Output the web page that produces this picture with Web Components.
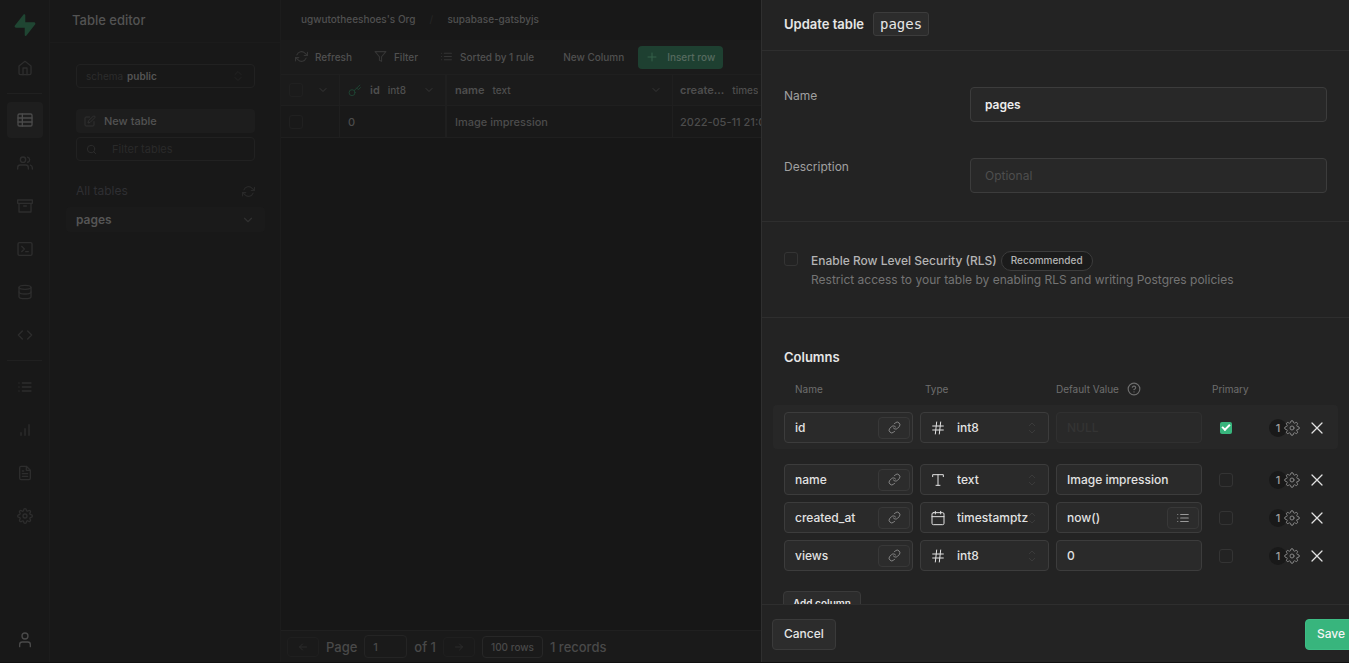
<!DOCTYPE html>
<html lang="en">
<head>
<meta charset="utf-8">
<meta name="viewport" content="width=device-width, initial-scale=1">
<title>Table editor</title>
<style>
  html, body { margin: 0; height: 100%; background: #181818; }
  body { font-family: Inter, "Liberation Sans", sans-serif; font-size: 12px; line-height: 16px; color: #4c4c4c; }
</style>
</head>
<body>
<studio-app></studio-app>

<script>
const reset = `
  *, *::before, *::after { box-sizing: border-box; }
  button, input, select { font: inherit; color: inherit; margin: 0; padding: 0; border: 0; background: none; outline: 0; min-width: 0; }
  button { cursor: pointer; display: inline-flex; align-items: center; justify-content: center; white-space: nowrap; }
  a { color: inherit; text-decoration: none; }
  h1, h2, p, ul { margin: 0; padding: 0; font-size: inherit; list-style: none; }
`;

function define(tag, render) {
  customElements.define(tag, class extends HTMLElement {
    connectedCallback() {
      if (this.shadowRoot) return;
      const root = this.attachShadow({ mode: 'open' });
      const tpl = document.createElement('template');
      tpl.innerHTML = render(this);
      root.append(tpl.content.cloneNode(true));
    }
  });
}

const icons = {
  home: '<path d="M3 9l9-7 9 7v11a2 2 0 0 1-2 2H5a2 2 0 0 1-2-2z"/><path d="M9 22V12h6v10"/>',
  table: '<rect x="1.500" y="3" width="21" height="18" rx="2"/><path d="M1.500 9h21M1.500 15h21M8 3v18"/>',
  users: '<path d="M17 21v-2a4 4 0 0 0-4-4H5a4 4 0 0 0-4 4v2"/><circle cx="9" cy="7" r="4"/><path d="M23 21v-2a4 4 0 0 0-3-3.870M16 3.130a4 4 0 0 1 0 7.750"/>',
  archive: '<path d="M21 8v13H3V8M1 3h22v5H1zM10 12h4"/>',
  terminal: '<rect x="1.500" y="2.500" width="21" height="19" rx="2"/><path d="M7 8l4 4-4 4M13 16h4"/>',
  database: '<ellipse cx="12" cy="5" rx="9" ry="3"/><path d="M21 12c0 1.660-4 3-9 3s-9-1.340-9-3"/><path d="M3 5v14c0 1.660 4 3 9 3s9-1.340 9-3V5"/>',
  code: '<path d="M16 18l6-6-6-6M8 6l-6 6 6 6"/>',
  list: '<path d="M8 6h13M8 12h13M8 18h13M3 6h.01M3 12h.01M3 18h.01"/>',
  bars: '<path d="M18 20V4M12 20V10M6 20v-4"/>',
  file: '<path d="M14 2H6a2 2 0 0 0-2 2v16a2 2 0 0 0 2 2h12a2 2 0 0 0 2-2V8z"/><path d="M14 2v6h6M16 13H8M16 17H8M10 9H8"/>',
  settings: '<circle cx="12" cy="12" r="3"/><path d="M19.400 15a1.650 1.650 0 0 0 .33 1.820l.06.06a2 2 0 0 1 0 2.830 2 2 0 0 1-2.830 0l-.06-.06a1.650 1.650 0 0 0-1.820-.33 1.650 1.650 0 0 0-1 1.510V21a2 2 0 0 1-2 2 2 2 0 0 1-2-2v-.09A1.650 1.650 0 0 0 9 19.400a1.650 1.650 0 0 0-1.820.33l-.06.06a2 2 0 0 1-2.830 0 2 2 0 0 1 0-2.830l.06-.06a1.650 1.650 0 0 0 .33-1.820 1.650 1.650 0 0 0-1.510-1H3a2 2 0 0 1-2-2 2 2 0 0 1 2-2h.09A1.650 1.650 0 0 0 4.600 9a1.650 1.650 0 0 0-.33-1.820l-.06-.06a2 2 0 0 1 0-2.830 2 2 0 0 1 2.830 0l.06.06a1.650 1.650 0 0 0 1.820.33H9a1.650 1.650 0 0 0 1-1.510V3a2 2 0 0 1 2-2 2 2 0 0 1 2 2v.09a1.650 1.650 0 0 0 1 1.510 1.650 1.650 0 0 0 1.820-.33l.06-.06a2 2 0 0 1 2.830 0 2 2 0 0 1 0 2.830l-.06.06a1.650 1.650 0 0 0-.33 1.820V9a1.650 1.650 0 0 0 1.510 1H21a2 2 0 0 1 2 2 2 2 0 0 1-2 2h-.09a1.650 1.650 0 0 0-1.510 1z"/>',
  user: '<path d="M20 22v-3a4 4 0 0 0-4-4H8a4 4 0 0 0-4 4v3"/><circle cx="12" cy="6" r="4.500"/>',
  bolt: '<path fill="currentColor" stroke="none" d="M13.600 23.500c-.6.800-1.900.4-1.900-.6V15H2.200C.9 15 .2 13.500 1 12.500L10.400.6c.6-.8 1.900-.4 1.900.6V9h9.500c1.300 0 2 1.500 1.200 2.500z"/>',
  refresh: '<path d="M23 4v6h-6M1 20v-6h6"/><path d="M3.510 9a9 9 0 0 1 14.850-3.360L23 10M1 14l4.640 4.360A9 9 0 0 0 20.490 15"/>',
  filter: '<path d="M22 3H2l8 9.460V19l4 2v-8.540z"/>',
  plus: '<path d="M12 4v16M4 12h16"/>',
  edit: '<path d="M11 4H4a2 2 0 0 0-2 2v14a2 2 0 0 0 2 2h14a2 2 0 0 0 2-2v-7"/><path d="M18.500 2.500a2.120 2.120 0 0 1 3 3L12 15l-4 1 1-4z"/>',
  search: '<circle cx="11" cy="11" r="8"/><path d="M21 21l-4.350-4.350"/>',
  chevron: '<path d="M6 9l6 6 6-6"/>',
  updown: '<path d="M6 9l6-6 6 6M6 15l6 6 6-6"/>',
  key: '<circle cx="7.500" cy="16" r="5.500"/><path d="M11.500 12L22 2M16 7.500l3 3 4-4"/>',
  left: '<path d="M19 12H5M11 6l-6 6 6 6"/>',
  right: '<path d="M5 12h14M13 6l6 6-6 6"/>',
  link: '<path d="M10 13a5 5 0 0 0 7.540.54l3-3a5 5 0 0 0-7.070-7.070l-1.720 1.710"/><path d="M14 11a5 5 0 0 0-7.540-.54l-3 3a5 5 0 0 0 7.070 7.070l1.710-1.710"/>',
  hash: '<path d="M4 9h16M4 15h16M10 3L8 21M16 3l-2 18"/>',
  type: '<path d="M4 7V4h16v3M9 20h6M12 4v16"/>',
  calendar: '<rect x="3" y="4" width="18" height="18" rx="2"/><path d="M16 2v4M8 2v4M3 10h18"/>',
  help: '<circle cx="12" cy="12" r="10"/><path d="M9.090 9a3 3 0 0 1 5.830 1c0 2-3 3-3 3M12 17h.01"/>',
  close: '<path d="M18 6L6 18M6 6l12 12"/>'
};

define('ui-icon', el => {
  const size = el.getAttribute('size') || 16;
  return `<style>:host { display: inline-flex; flex: none; } svg { display: block; }</style>
  <svg width="${size}" height="${size}" viewBox="0 0 24 24" fill="none" stroke="currentColor" stroke-linecap="round" stroke-linejoin="round"
    stroke-width="${el.getAttribute('weight') || 2}" aria-hidden="true">${icons[el.getAttribute('name')]}</svg>`;
});

/* Left icon rail */
define('nav-rail', () => {
  const item = (icon, label, cls = '') =>
    `<a href="#" class="${cls}" aria-label="${label}"><ui-icon name="${icon}" size="16"></ui-icon></a>`;
  return `<style>${reset}
    :host { display: block; border-right: 1px solid #1c1c1c; color: #2d2d2d; }
    nav { display: flex; flex-direction: column; align-items: center; gap: 7px; height: 100%; padding: 14px 7px 4px; }
    a { display: flex; align-items: center; justify-content: center; width: 36px; height: 36px; border-radius: 4px; }
    .logo { height: 22px; margin-bottom: 7px; color: #1f4532; }
    .active { background: #1e1e1e; color: #4a4a4a; }
    .me { margin-top: auto; color: #4a4a4a; }
    hr { width: 100%; height: 1px; margin: 0 0 1px; border: 0; background: #202020; }
  </style>
  <nav>
    <a href="#" class="logo" aria-label="Home page"><ui-icon name="bolt" size="22"></ui-icon></a>
    ${item('home', 'Home')}<hr>
    ${item('table', 'Table editor', 'active')}
    ${item('users', 'Authentication')}${item('archive', 'Storage')}${item('terminal', 'SQL editor')}
    ${item('database', 'Database')}${item('code', 'Functions')}<hr>
    ${item('list', 'Logs')}${item('bars', 'Reports')}${item('file', 'API docs')}${item('settings', 'Settings')}
    ${item('user', 'Account', 'me')}
  </nav>`;
});

/* List of tables */
define('table-menu', () => `<style>${reset}
    :host { display: block; border-right: 1px solid #1c1c1c; }
    header { height: 43px; padding: 12px 22px; border-bottom: 1px solid #1b1b1b; }
    h1 { font-size: 13px; font-weight: 500; color: #535353; }
    .body { display: flex; flex-direction: column; padding: 21px 25px 21px 26px; font-size: 11px; }
    .box { display: flex; align-items: center; border: 1px solid #212121; border-radius: 4px; height: 24px; padding: 0 10px; }
    .schema { gap: 4px; margin-bottom: 21px; padding-left: 9px; color: #2c2c2c; font-size: 10px; }
    select { appearance: none; flex: 1; color: #555; font-weight: 600; }
    .new { justify-content: flex-start; gap: 8px; height: 24px; padding: 0 8px 1px; border-radius: 4px; background: #1d1d1d; color: #535353; font-weight: 500; margin-bottom: 4px; }
    .new ui-icon { color: #303030; }
    .search { gap: 15px; padding-left: 9px; color: #2d2d2d; }
    .search input { flex: 1; }
    input::placeholder { color: #2a2a2a; opacity: 1; }
    .all { display: flex; justify-content: space-between; align-items: center; margin: 22px 0 8px; font-size: 12px; color: #2f2f33; }
    .all h2 { font-weight: 400; }
    .all button { color: #292929; }
    .schema ui-icon { color: #232323; }
    .row { display: flex; justify-content: space-between; align-items: center; height: 25px; margin: 0 -10px; padding: 0 10px; border-radius: 4px; background: #1a1a1a; font-size: 12px; font-weight: 600; color: #555; }
    .row ui-icon { color: #303030; }
  </style>
  <header><h1>Table editor</h1></header>
  <div class="body">
    <div class="box schema"><label for="schema">schema</label><select id="schema"><option>public</option></select><ui-icon name="updown" size="12"></ui-icon></div>
    <button class="new" type="button"><ui-icon name="edit" size="12"></ui-icon>New table</button>
    <div class="box search"><ui-icon name="search" size="11"></ui-icon><input type="text" placeholder="Filter tables" aria-label="Filter tables"></div>
    <div class="all"><h2>All tables</h2><button type="button" aria-label="Refresh tables"><ui-icon name="refresh" size="13"></ui-icon></button></div>
    <a href="#" class="row">pages<ui-icon name="chevron" size="14"></ui-icon></a>
  </div>`);

/* Breadcrumb and grid actions */
define('grid-toolbar', () => `<style>${reset}
    :host { display: block; font-size: 10px; font-weight: 500; color: #505050; white-space: nowrap; }
    .crumbs { display: flex; align-items: center; gap: 13px; height: 40px; padding: 0 20px 2px; }
    .crumbs span { color: #242424; width: 6px; text-align: center; }
    .bar { display: flex; align-items: center; height: 34px; padding: 0 14px; background: #1b1b1b; }
    .bar button { gap: 7px; height: 23px; padding-bottom: 1px; margin-right: 22px; }
    ui-icon { color: #353535; }
    .bar .col { margin: 0 14px 0 7px; }
    .bar .insert { gap: 9px; padding: 0 8px 1px; border-radius: 4px; background: #1e4031; margin: 0; color: #566a5f; }
    .insert ui-icon { color: #35614a; }
  </style>
  <nav class="crumbs" aria-label="Breadcrumb"><a href="#">ugwutotheeshoes's Org</a><span>/</span><a href="#">supabase-gatsbyjs</a></nav>
  <div class="bar">
    <button type="button"><ui-icon name="refresh" size="13"></ui-icon>Refresh</button>
    <button type="button"><ui-icon name="filter" size="13"></ui-icon>Filter</button>
    <button type="button"><ui-icon name="list" size="13"></ui-icon>Sorted by 1 rule</button>
    <button type="button" class="col">New Column</button>
    <button type="button" class="insert"><ui-icon name="plus" size="12"></ui-icon>Insert row</button>
  </div>`);

/* Rows of the open table */
define('data-grid', () => {
  const head = (name, type, key = '') =>
    `<th scope="col"><div>${key && '<ui-icon class="key" name="key" size="13" weight="1.500"></ui-icon>'}<b>${name}</b><small>${type}</small><ui-icon class="end" name="chevron" size="12"></ui-icon></div></th>`;
  return `<style>${reset}
    :host { display: block; overflow: hidden; background: #171717; }
    table { width: 100%; min-width: 480px; table-layout: fixed; border-collapse: separate; border-spacing: 0; border-top: 1px solid #1f1f1f; font-size: 11px; }
    th, td { height: 32px; padding: 0 8px; border-bottom: 1px solid #1f1f1f; border-right: 1px solid #1f1f1f; background: #191919; text-align: left; font-weight: 500; white-space: nowrap; overflow: hidden; }
    th { height: 31px; background: #1b1b1b; color: #4e4e4e; }
    th:nth-child(2), td:nth-child(2) { border-right-width: 2px; }
    th:last-child, td:last-child { padding: 0 0 0 7px; border-right: 0; }
    th:last-child .end { display: none; }
    div { display: flex; align-items: center; gap: 8px; }
    b { font-weight: 600; }
    small { min-width: 0; overflow: hidden; font-size: 10px; }
    .key { color: #1f4a36; margin-right: 1px; }
    .end { margin-left: auto; color: #363636; }
    th:nth-child(1) .end, th:nth-child(2) .end, th:nth-child(3) .end { margin-right: 2px; }
    input { appearance: none; display: block; width: 14px; height: 14px; border: 1px solid #202020; border-radius: 3px; }
  </style>
  <table>
    <colgroup><col style="width:59px"><col style="width:107px"><col style="width:226px"><col></colgroup>
    <thead><tr>
      <th scope="col"><div><input type="checkbox" aria-label="Select all rows"><ui-icon class="end" name="chevron" size="12"></ui-icon></div></th>
      ${head('id', 'int8', 'key')}${head('name', 'text')}${head('create...', 'times')}
    </tr></thead>
    <tbody><tr><td><input type="checkbox" aria-label="Select row 0"></td><td>0</td><td>Image impression</td><td>2022-05-11 21:03</td></tr></tbody>
  </table>`;
});

define('grid-pager', () => `<style>${reset}
    :host { display: flex; align-items: center; gap: 7px; height: 32px; padding: 0 6px; border-top: 1px solid #202020; background: #1a1a1a; font-size: 13px; font-weight: 500; color: #494949; white-space: nowrap; }
    :host * { flex: none; }
    button { height: 20px; width: 32px; border: 1px solid #1f1f1f; border-radius: 4px; color: #2b2b2b; }
    input { width: 43px; height: 23px; padding: 0 8px; border: 1px solid #242424; border-radius: 4px; font-size: 11px; }
    .rows { width: auto; height: 22px; padding: 0 8px; border-color: #272727; color: #494949; font-size: 10px; }
  </style>
  <button type="button" aria-label="Previous page"><ui-icon name="left" size="12"></ui-icon></button>
  <label for="page">Page</label><input id="page" type="text" value="1"><span>of 1</span>
  <button type="button" aria-label="Next page"><ui-icon name="right" size="12"></ui-icon></button>
  <button type="button" class="rows">100 rows</button><span>1 records</span>`);

/* Labelled text box of the drawer form */
define('form-field', el => `<style>${reset}
    :host { display: grid; grid-template-columns: 186px 1fr; color: #a0a0a0; }
    label { padding-top: 1px; }
    input { height: 35px; padding: 0 14px; border: 1px solid #3c3c3c; border-radius: 4px; background: #282828; color: #ededed; font-weight: 600; }
    input::placeholder { color: #4e4e4e; opacity: 1; font-weight: 400; }
  </style>
  <label for="field">${el.getAttribute('label')}</label>
  <input id="field" type="text" value="${el.getAttribute('value') || ''}" placeholder="${el.getAttribute('placeholder') || ''}">`);

const tick = `
  input[type=checkbox] { appearance: none; flex: none; display: grid; place-items: center; width: 14px; height: 14px; border: 1px solid #343434; border-radius: 3px; }
  input[type=checkbox]:checked { width: 12px; height: 12px; border: 0; margin: 1px; background: #38b57d; border-radius: 2px; }
  input[type=checkbox]:checked::before { content: ""; width: 8px; height: 5px; margin-bottom: 2px; border: solid #fff; border-width: 0 0 2px 2px; transform: rotate(-45deg); }
`;
const tracks = 'display: grid; grid-template-columns: 129fr 129fr 146fr 46px 65px; gap: 7px;';

/* One editable column definition */
define('column-row', el => {
  const at = n => el.getAttribute(n) || '';
  return `<style>${reset}${tick}
    :host { ${tracks} align-items: center; color: #e2e2e2; font-weight: 500; }
    :host([primary]) { margin: 0 -11px 8px; padding: 7px 11px 6px; border-radius: 4px; background: #272727; }
    .box { display: flex; align-items: center; height: 31px; padding: 0 2px 0 10px; border: 1px solid #3c3c3c; border-radius: 4px; background: #2a2a2a; min-width: 0; }
    .box input { flex: 1; width: 0; height: 100%; padding-bottom: 1px; }
    .box button { width: 32px; height: 22px; border: 1px solid #383838; border-radius: 4px; background: #2c2c2c; color: #999; }
    .type { gap: 11px; padding: 0 0 0 9px; }
    select { appearance: none; flex: 1; height: 100%; cursor: pointer;
      background: url('data:image/svg+xml,<svg xmlns="http://www.w3.org/2000/svg" width="8" height="12" fill="none" stroke="%233a3a3a"><path d="M1 4l3-3 3 3M1 8l3 3 3-3"/></svg>') right 12px center no-repeat; }
    option { background: #2a2a2a; }
    .locked { background: #292929; border-color: #303030; }
    input::placeholder { color: #343434; opacity: 1; }
    .pk { padding-left: 10px; }
    .end { display: flex; align-items: center; justify-content: flex-end; }
    .count { width: 18px; height: 18px; border-radius: 9px; background: #191919; color: #a0a0a0; font-size: 11px; line-height: 18px; text-align: center; }
    .gear { margin: 0 7px 0 -3px; color: #858585; }
  </style>
  <div class="box"><input type="text" value="${at('name')}" aria-label="Column name"><button type="button" aria-label="Add foreign key"><ui-icon name="link" size="13" weight="1.500"></ui-icon></button></div>
  <div class="box type"><ui-icon name="${at('icon')}" weight="1.500"></ui-icon><select aria-label="Column type"><option>${at('type')}</option></select></div>
  <div class="box${el.hasAttribute('primary') ? ' locked' : ''}"><input type="text" value="${at('value')}" placeholder="NULL" aria-label="Default value">${el.hasAttribute('suggest') ? '<button type="button" aria-label="Suggested values"><ui-icon name="list" size="14"></ui-icon></button>' : ''}</div>
  <div class="pk"><input type="checkbox" aria-label="Primary key"${el.hasAttribute('primary') ? ' checked' : ''}></div>
  <div class="end"><span class="count">1</span><button type="button" class="gear" aria-label="Column settings"><ui-icon name="settings" weight="1.500"></ui-icon></button>
    <button type="button" aria-label="Remove column"><ui-icon name="close" size="20" weight="1.500"></ui-icon></button></div>`;
});

define('column-list', () => `<style>${reset}
    :host { display: flex; flex-direction: column; align-items: stretch; gap: 7px; }
    .head { ${tracks} margin-bottom: 1px; color: #6e6e6e; font-size: 10px; }
    .head span { display: flex; align-items: center; gap: 8px; white-space: nowrap; }
    .head > :nth-child(1) { padding-left: 11px; }
    .head > :nth-child(2) { padding-left: 5px; }
    .head > :nth-child(4) { padding-left: 3px; }
  </style>
  <div class="head"><span>Name</span><span>Type</span><span>Default Value<ui-icon name="help" size="14"></ui-icon></span><span>Primary</span></div>
  <slot></slot>`);

define('side-drawer', () => `<style>${reset}
    :host { display: flex; flex-direction: column; background: #232323; border-left: 1px solid #2f2f2f; color: #e6e6e6; }
    header { flex: none; display: flex; align-items: center; gap: 9px; height: 51px; padding: 0 22px 2px; border-bottom: 1px solid #2e2e2e; font-size: 13px; font-weight: 600; }
    .body { flex: 1; min-height: 0; overflow: hidden; }
    footer { flex: none; display: flex; justify-content: space-between; height: 58px; margin-right: -8px; padding: 14px 0 0 10px; border-top: 1px solid #2e2e2e; }
  </style>
  <header><slot name="title"></slot></header>
  <div class="body"><slot></slot></div>
  <footer><slot name="actions"></slot></footer>`);

define('ui-button', el => `<style>${reset}
    :host { display: inline-flex; align-self: flex-start; }
    button { height: 31px; padding: 0 11px 1px; border: 1px solid #3a3a3a; border-radius: 4px; background: #2c2c2c; color: #e6e6e6; font-weight: 500; }
    :host([kind=primary]) button { background: #38b57d; border-color: #3dbd85; color: #f4f4f4; }
    :host([kind=small]) button { height: 24px; padding: 0 9px; font-size: 10px; font-weight: 600; }
  </style><button type="button"><slot></slot></button>`);

define('table-form', () => `<style>${reset}${tick}
    :host { display: flex; flex-direction: column; height: 100%; min-height: 0; }
    side-drawer { flex: 1; min-height: 0; overflow: hidden; }
    h1 { font-weight: 600; }
    code { padding: 3px 6px; border: 1px solid #3c3c3c; border-radius: 3px; background: #2c2c2c; font: 400 14px/16px "DejaVu Sans Mono", monospace; }
    section { padding: 0 22px; border-bottom: 1px solid #2e2e2e; }
    .general { display: grid; gap: 36px; padding-top: 36px; padding-bottom: 28px; }
    .rls { display: grid; grid-template-columns: 14px 1fr; column-gap: 13px; padding-top: 29px; padding-bottom: 28px; }
    .rls input { margin-top: 1px; }
    .rls div { display: flex; align-items: center; gap: 4px; color: #b4b4b4; font-weight: 500; }
    .rls p { grid-column: 2; line-height: 18px; color: #747474; }
    .tag { height: 20px; padding: 0 9px; border: 1px solid #3c3c3c; border-radius: 10px; background: #1b1b1b; font-size: 10px; line-height: 16px; }
    .columns { display: flex; flex-direction: column; padding-top: 31px; border: 0; }
    .columns h2 { margin-bottom: 16px; font-size: 13px; font-weight: 600; }
    .columns ui-button { margin: 20px 0 0 -1px; }
  </style>
  <side-drawer>
    <h1 slot="title">Update table</h1><code slot="title">pages</code>
    <section class="general">
      <form-field label="Name" value="pages"></form-field>
      <form-field label="Description" placeholder="Optional"></form-field>
    </section>
    <section class="rls">
      <input type="checkbox" id="rls"><div><label for="rls">Enable Row Level Security (RLS)</label><span class="tag">Recommended</span></div>
      <p>Restrict access to your table by enabling RLS and writing Postgres policies</p>
    </section>
    <section class="columns">
      <h2>Columns</h2>
      <column-list>
        <column-row name="id" icon="hash" type="int8" primary></column-row>
        <column-row name="name" icon="type" type="text" value="Image impression"></column-row>
        <column-row name="created_at" icon="calendar" type="timestamptz" value="now()" suggest></column-row>
        <column-row name="views" icon="hash" type="int8" value="0"></column-row>
      </column-list>
      <ui-button kind="small">Add column</ui-button>
    </section>
    <ui-button slot="actions">Cancel</ui-button>
    <ui-button slot="actions" kind="primary">Save</ui-button>
  </side-drawer>`);

define('studio-app', () => `<style>${reset}
    :host { display: grid; grid-template-columns: 50px 231px 1fr 588px; grid-template-rows: minmax(0, 1fr); height: 100vh; box-sizing: border-box; overflow: hidden; border-bottom: 1px solid #101010; }
    main { display: flex; flex-direction: column; min-width: 0; overflow: hidden; }
    data-grid { flex: 1; }
  </style>
  <nav-rail></nav-rail>
  <table-menu></table-menu>
  <main><grid-toolbar></grid-toolbar><data-grid></data-grid><grid-pager></grid-pager></main>
  <table-form></table-form>`);
</script>
</body>
</html>
